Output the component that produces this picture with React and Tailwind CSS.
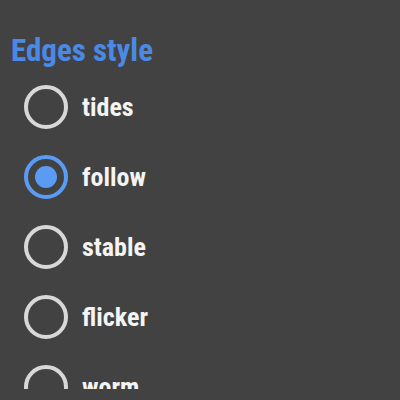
import React, { useState } from "react";

const options = ["tides", "follow", "stable", "flicker", "worm"];

const App = () => {
  const [selected, setSelected] = useState("follow");

  return (
    <div className="w-[400px] h-[400px] bg-[#424242] overflow-hidden" style={{ fontFamily: "Roboto, sans-serif" }}>
      <div className="h-[389px] overflow-hidden">
        <h1 className="pl-[11px] pt-[35px] h-[72px] text-[31px] leading-[32px] font-bold font-stretch-condensed text-[#4a8ae6]">
          Edges style
        </h1>
        <div className="flex flex-col">
          {options.map((opt) => {
            const on = opt === selected;
            return (
              <button
                key={opt}
                onClick={() => setSelected(opt)}
                className="h-[70px] flex items-center pl-[24px] gap-[14px] text-left"
              >
                <span
                  className={
                    "w-[44px] h-[44px] rounded-full border-[4px] flex items-center justify-center shrink-0 " +
                    (on ? "border-[#5a9bf3]" : "border-[#d8d8d8]")
                  }
                >
                  {on && <span className="w-[22px] h-[22px] rounded-full bg-[#5a9bf3]" />}
                </span>
                <span className="text-[26px] font-bold font-stretch-condensed text-[#f4f4f4]">{opt}</span>
              </button>
            );
          })}
        </div>
      </div>
    </div>
  );
};

export default App;
